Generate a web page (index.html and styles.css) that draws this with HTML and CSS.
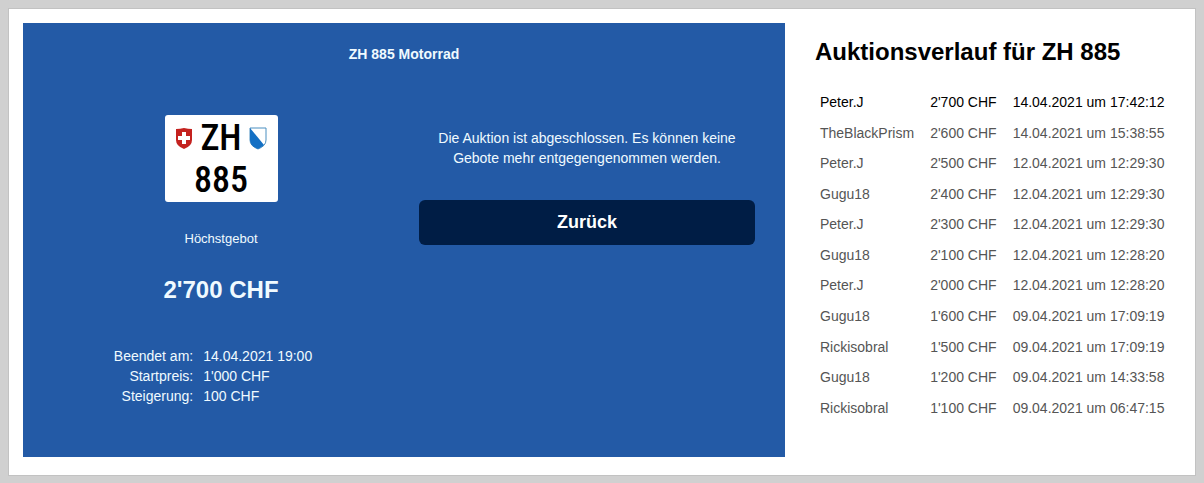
FILE: index.html
```html
<!DOCTYPE html>
<html lang="de">

<head>
    <meta charset="UTF-8">
    <meta name="viewport" content="width=device-width, initial-scale=1.0">
    <title>ZH 885 Motorrad</title>
    <link rel="stylesheet" href="styles.css">
</head>

<body>
    <main class="page">
        <section class="auction">
            <h1>ZH 885 Motorrad</h1>
            <div class="columns">
                <div class="bid">
                    <div class="plate">
                        <div class="plate-row canton">
                            <svg class="shield" viewBox="0 0 18 23">
                                <path d="M1 2Q5 2 9 1Q13 2 17 2V13Q17 19 9 22Q1 19 1 13Z" fill="#c4221f" />
                                <path d="M7 5H11V9H15V13H11V17H7V13H3V9H7Z" fill="#fff" />
                            </svg>
                            <span>ZH</span>
                            <svg class="shield" viewBox="0 0 18 23">
                                <path d="M1 1H17V13Q17 19 9 22Q1 19 1 13Z" fill="#fff" stroke="#4a8fc0" stroke-width="1" />
                                <path d="M1 1L15 18Q13 20 9 22Q1 19 1 13Z" fill="#1470c4" />
                            </svg>
                        </div>
                        <div class="plate-row">885</div>
                    </div>
                    <div class="label">Höchstgebot</div>
                    <div class="price">2'700 CHF</div>
                    <table class="details">
                        <tr>
                            <th scope="row">Beendet am:</th>
                            <td>14.04.2021 19:00</td>
                        </tr>
                        <tr>
                            <th scope="row">Startpreis:</th>
                            <td>1'000 CHF</td>
                        </tr>
                        <tr>
                            <th scope="row">Steigerung:</th>
                            <td>100 CHF</td>
                        </tr>
                    </table>
                </div>
                <div class="status">
                    <p>Die Auktion ist abgeschlossen. Es können keine Gebote mehr entgegengenommen werden.</p>
                    <button type="button">Zurück</button>
                </div>
            </div>
        </section>

        <section class="history">
            <h2>Auktionsverlauf für ZH 885</h2>
            <table class="bids">
                <tr class="top">
                    <td>Peter.J</td>
                    <td>2'700 CHF</td>
                    <td>14.04.2021 um 17:42:12</td>
                </tr>
                <tr>
                    <td>TheBlackPrism</td>
                    <td>2'600 CHF</td>
                    <td>14.04.2021 um 15:38:55</td>
                </tr>
                <tr>
                    <td>Peter.J</td>
                    <td>2'500 CHF</td>
                    <td>12.04.2021 um 12:29:30</td>
                </tr>
                <tr>
                    <td>Gugu18</td>
                    <td>2'400 CHF</td>
                    <td>12.04.2021 um 12:29:30</td>
                </tr>
                <tr>
                    <td>Peter.J</td>
                    <td>2'300 CHF</td>
                    <td>12.04.2021 um 12:29:30</td>
                </tr>
                <tr>
                    <td>Gugu18</td>
                    <td>2'100 CHF</td>
                    <td>12.04.2021 um 12:28:20</td>
                </tr>
                <tr>
                    <td>Peter.J</td>
                    <td>2'000 CHF</td>
                    <td>12.04.2021 um 12:28:20</td>
                </tr>
                <tr>
                    <td>Gugu18</td>
                    <td>1'600 CHF</td>
                    <td>09.04.2021 um 17:09:19</td>
                </tr>
                <tr>
                    <td>Rickisobral</td>
                    <td>1'500 CHF</td>
                    <td>09.04.2021 um 17:09:19</td>
                </tr>
                <tr>
                    <td>Gugu18</td>
                    <td>1'200 CHF</td>
                    <td>09.04.2021 um 14:33:58</td>
                </tr>
                <tr>
                    <td>Rickisobral</td>
                    <td>1'100 CHF</td>
                    <td>09.04.2021 um 06:47:15</td>
                </tr>
            </table>
        </section>
    </main>
</body>

</html>
```
FILE: styles.css
```css
* {
    box-sizing: border-box;
}

body {
    margin: 0;
    padding: 8px;
    background: #d0d0d0;
    font-family: "Liberation Sans", Arial, sans-serif;
    font-size: 14px;
    line-height: 20px;
    color: #000;
}

.page {
    display: grid;
    grid-template-columns: 1fr 366px;
    gap: 30px;
    padding: 14px 14px 18px;
    background: #fff;
    border: 1px solid #c2c2c2;
}

.auction {
    padding: 21px 30px 51px;
    background: #235aa6;
    color: #f0faff;
}

h1 {
    margin: 0;
    font-size: 14px;
    line-height: 20px;
    text-align: center;
}

.columns {
    display: grid;
    grid-template-columns: 1fr 1fr;
    gap: 30px;
    padding-top: 51px;
}

.bid {
    display: flex;
    flex-direction: column;
    align-items: center;
}

.plate {
    width: 113px;
    height: 87px;
    padding: 2px 10px;
    background: #fff;
    border-radius: 3px;
    color: #000;
    font-family: "Roboto Condensed", "Open Sans Condensed", "Liberation Sans", sans-serif;
    font-size: 36px;
    font-weight: 500;
    line-height: 42px;
}

.plate-row {
    display: flex;
    justify-content: center;
    align-items: center;
}

.canton {
    justify-content: space-between;
}

.shield {
    flex: none;
    width: 18px;
    height: 23px;
}

.label {
    margin-top: 27px;
    font-size: 13px;
}

.price {
    margin-top: 27px;
    font-size: 24px;
    font-weight: bold;
    line-height: 28px;
}

.details {
    margin-top: 42px;
    margin-right: 16px;
    border-collapse: collapse;
}

.details th {
    padding: 0 10px 0 0;
    font-weight: normal;
    text-align: right;
}

.details td {
    padding: 0;
}

.status p {
    margin: 13px 0 32px;
    padding: 0 12px;
    text-align: center;
}

.status button {
    display: block;
    width: 100%;
    padding: 12px;
    background: #001d45;
    border: 0;
    border-radius: 6px;
    color: #fff;
    font-family: inherit;
    font-size: 18px;
    font-weight: bold;
    line-height: 21px;
    cursor: pointer;
}

h2 {
    margin: 14px 0 20px;
    font-size: 24px;
    line-height: 30px;
}

.bids {
    height: 336px;
    border-collapse: collapse;
    color: #555;
}

.bids td {
    padding: 0 16px 0 0;
    white-space: nowrap;
}

.bids td:first-child {
    padding-left: 5px;
}

.bids .top {
    color: #000;
}
```
